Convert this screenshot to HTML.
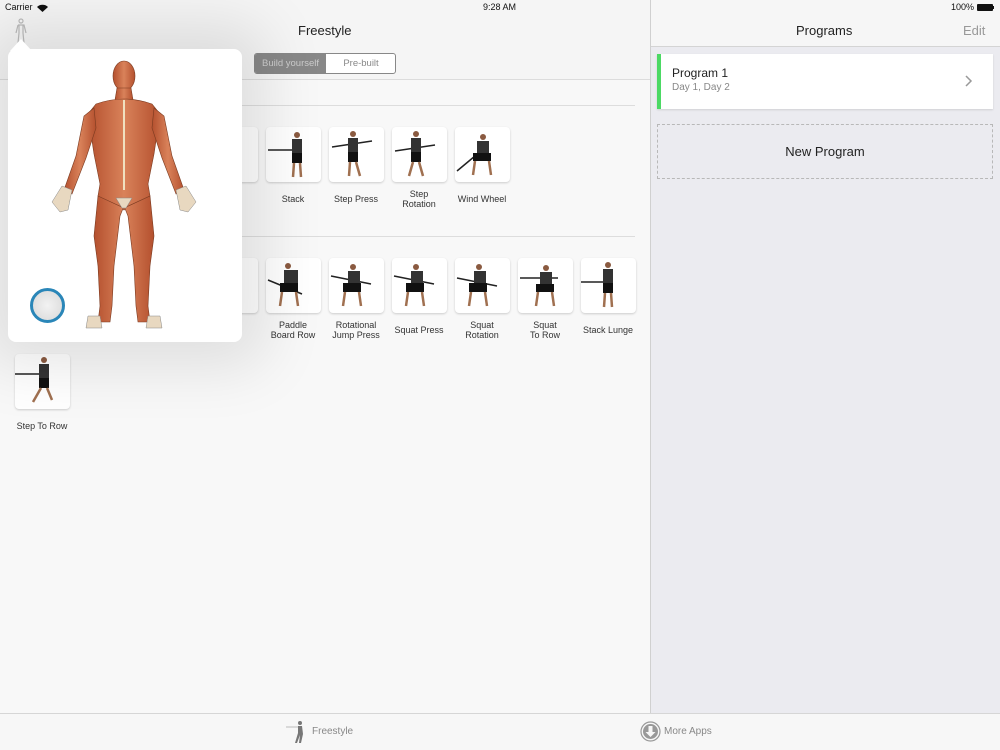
<!DOCTYPE html>
<html><head><meta charset="utf-8"><style>
*{margin:0;padding:0;box-sizing:border-box}
body{width:1000px;height:750px;overflow:hidden;background:#f8f8f8;font-family:"Liberation Sans",sans-serif;position:relative;color:#222}
.abs{position:absolute}
#left{left:0;top:0;width:650px;height:713px;background:#f8f8f8}
#nav{left:0;top:0;width:650px;height:80px;background:#f5f5f5;border-bottom:1px solid #dcdcdc}
#right{left:650px;top:0;width:350px;height:713px;background:#ebebf0;border-left:1px solid #d0d0d0}
#rnav{left:651px;top:0;width:349px;height:47px;background:#f6f6f6;border-bottom:1px solid #d4d4d4}
.thumb{position:absolute;width:55px;height:55px;background:#fff;border-radius:4px;box-shadow:0 1px 2px rgba(0,0,0,.18)}
.lbl{position:absolute;width:70px;text-align:center;font-size:9px;line-height:10px;color:#333}
#tab{left:0;top:713px;width:1000px;height:37px;background:#f7f7f7;border-top:1px solid #d6d6d6}
</style></head><body>
<div id="left" class="abs"></div>
<div id="nav" class="abs"></div>
<div class="abs" style="left:5px;top:2px;font-size:9px;color:#111">Carrier</div>
<svg class="abs" style="left:37px;top:4px" width="11" height="8" viewBox="0 0 11 8"><path d="M0 3a8 8 0 0 1 11 0L5.5 8z" fill="#111"/></svg>
<div class="abs" style="left:483px;top:2px;font-size:9px;color:#111">9:28 AM</div>
<div class="abs" style="left:298px;top:23px;font-size:13px;color:#222">Freestyle</div>
<svg class="abs" style="left:13px;top:18px" width="16" height="26" viewBox="0 0 16 26"><g fill="none" stroke="#bbb" stroke-width="1.2"><circle cx="8" cy="3" r="2"/><path d="M5 7h6l2 8M5 7l-2 8M6 7v8l-1 10M10 7v8l1 10"/></g></svg>
<div class="abs" style="left:254px;top:53px;width:142px;height:21px;border:1px solid #888;border-radius:3px;overflow:hidden;font-size:9.5px;line-height:19px;background:#fff">
<div class="abs" style="left:0;top:0;width:71px;height:19px;background:#888;color:#ccc;text-align:center">Build yourself</div>
<div class="abs" style="left:71px;top:0;width:70px;height:19px;color:#888;text-align:center">Pre-built</div></div>
<div class="abs" style="left:240px;top:105px;width:395px;height:1px;background:#ddd"></div>
<div class="abs" style="left:240px;top:236px;width:395px;height:1px;background:#ddd"></div>

<div class="thumb" style="left:203px;top:127px"></div>
<div class="thumb" style="left:203px;top:258px"></div>

<div class="thumb" style="left:266px;top:127px"></div>
<div class="thumb" style="left:329px;top:127px"></div>
<div class="thumb" style="left:392px;top:127px"></div>
<div class="thumb" style="left:455px;top:127px"></div>
<div class="lbl" style="left:258px;top:194px">Stack</div>
<div class="lbl" style="left:321px;top:194px">Step Press</div>
<div class="lbl" style="left:384px;top:189px">Step<br>Rotation</div>
<div class="lbl" style="left:447px;top:194px">Wind Wheel</div>
<div class="thumb" style="left:266px;top:258px"></div>
<div class="thumb" style="left:329px;top:258px"></div>
<div class="thumb" style="left:392px;top:258px"></div>
<div class="thumb" style="left:455px;top:258px"></div>
<div class="thumb" style="left:518px;top:258px"></div>
<div class="thumb" style="left:581px;top:258px"></div>
<div class="lbl" style="left:258px;top:320px">Paddle<br>Board Row</div>
<div class="lbl" style="left:321px;top:320px">Rotational<br>Jump Press</div>
<div class="lbl" style="left:384px;top:325px">Squat Press</div>
<div class="lbl" style="left:447px;top:320px">Squat<br>Rotation</div>
<div class="lbl" style="left:510px;top:320px">Squat<br>To Row</div>
<div class="lbl" style="left:573px;top:325px">Stack Lunge</div>
<div class="thumb" style="left:15px;top:354px"></div>
<div class="lbl" style="left:7px;top:421px">Step To Row</div>

<svg class="abs" style="left:0;top:0" width="650" height="440">
<g transform="translate(266,127)"><path d="M2 23h28" stroke="#222" stroke-width="1.5"/><circle cx="31" cy="8" r="3" fill="#8a5a40"/><rect x="26" y="12" width="10" height="14" fill="#333"/><rect x="26" y="26" width="10" height="10" fill="#111"/><path d="M28 36l-1 14M34 36l1 14" stroke="#a07050" stroke-width="2.5"/></g>
<g transform="translate(329,127)"><path d="M3 20l40-6" stroke="#222" stroke-width="1.5"/><circle cx="24" cy="7" r="3" fill="#8a5a40"/><rect x="19" y="11" width="10" height="14" fill="#333"/><rect x="19" y="25" width="10" height="10" fill="#111"/><path d="M21 35l-1 14M27 35l4 14" stroke="#a07050" stroke-width="2.5"/></g>
<g transform="translate(392,127)"><path d="M3 24l40-6" stroke="#222" stroke-width="1.5"/><circle cx="24" cy="7" r="3" fill="#8a5a40"/><rect x="19" y="11" width="10" height="14" fill="#333"/><rect x="19" y="25" width="10" height="10" fill="#111"/><path d="M21 35l-4 14M27 35l4 14" stroke="#a07050" stroke-width="2.5"/></g>
<g transform="translate(455,127)"><path d="M2 44l18-15" stroke="#222" stroke-width="1.5"/><circle cx="28" cy="10" r="3" fill="#8a5a40"/><rect x="22" y="14" width="12" height="12" fill="#333"/><rect x="18" y="26" width="18" height="8" fill="#111"/><path d="M20 34l-2 14M34 34l2 14" stroke="#a07050" stroke-width="2.5"/></g>
<g transform="translate(266,258)"><path d="M2 22l34 14" stroke="#222" stroke-width="1.5"/><circle cx="22" cy="8" r="3" fill="#8a5a40"/><rect x="18" y="12" width="14" height="13" fill="#333"/><rect x="14" y="25" width="18" height="9" fill="#111"/><path d="M16 34l-2 14M30 34l2 14" stroke="#a07050" stroke-width="2.5"/></g>
<g transform="translate(329,258)"><path d="M2 18l40 8" stroke="#222" stroke-width="1.5"/><circle cx="24" cy="9" r="3" fill="#8a5a40"/><rect x="19" y="13" width="12" height="12" fill="#333"/><rect x="14" y="25" width="18" height="9" fill="#111"/><path d="M16 34l-2 14M30 34l2 14" stroke="#a07050" stroke-width="2.5"/></g>
<g transform="translate(392,258)"><path d="M2 18l40 8" stroke="#222" stroke-width="1.5"/><circle cx="24" cy="9" r="3" fill="#8a5a40"/><rect x="19" y="13" width="12" height="12" fill="#333"/><rect x="14" y="25" width="18" height="9" fill="#111"/><path d="M16 34l-2 14M30 34l2 14" stroke="#a07050" stroke-width="2.5"/></g>
<g transform="translate(455,258)"><path d="M2 20l40 8" stroke="#222" stroke-width="1.5"/><circle cx="24" cy="9" r="3" fill="#8a5a40"/><rect x="19" y="13" width="12" height="12" fill="#333"/><rect x="14" y="25" width="18" height="9" fill="#111"/><path d="M16 34l-2 14M30 34l2 14" stroke="#a07050" stroke-width="2.5"/></g>
<g transform="translate(518,258)"><path d="M2 20h38" stroke="#222" stroke-width="1.5"/><circle cx="28" cy="10" r="3" fill="#8a5a40"/><rect x="22" y="14" width="12" height="12" fill="#333"/><rect x="18" y="26" width="18" height="8" fill="#111"/><path d="M20 34l-2 14M34 34l2 14" stroke="#a07050" stroke-width="2.5"/></g>
<g transform="translate(581,258)"><path d="M0 24h32" stroke="#222" stroke-width="1.5"/><circle cx="27" cy="7" r="3" fill="#8a5a40"/><rect x="22" y="11" width="10" height="14" fill="#333"/><rect x="22" y="25" width="10" height="10" fill="#111"/><path d="M24 35l-1 14M30 35l1 14" stroke="#a07050" stroke-width="2.5"/></g>
<g transform="translate(15,354)"><path d="M0 20h32" stroke="#222" stroke-width="1.5"/><circle cx="29" cy="6" r="3" fill="#8a5a40"/><rect x="24" y="10" width="10" height="14" fill="#333"/><rect x="24" y="24" width="10" height="10" fill="#111"/><path d="M26 34l-8 14M32 34l5 12" stroke="#a07050" stroke-width="2.5"/></g>
</svg>

<div class="abs" style="left:8px;top:49px;width:234px;height:293px;background:#fff;border-radius:8px;box-shadow:0 0 60px 25px rgba(0,0,0,.10)"></div>
<svg class="abs" style="left:8px;top:37px" width="30" height="14"><path d="M2 14L13 2l11 12z" fill="#fff"/></svg>
<svg class="abs" style="left:50px;top:58px" width="150" height="275" viewBox="50 58 150 275">
<defs><linearGradient id="m" x1="0" x2="1"><stop offset="0" stop-color="#b4502e"/><stop offset=".5" stop-color="#d9825a"/><stop offset="1" stop-color="#b4502e"/></linearGradient></defs>
<g fill="url(#m)" stroke="#7a3a20" stroke-width=".6">
<ellipse cx="124" cy="76" rx="11" ry="15"/>
<path d="M117 88h14l2 12h-18z"/>
<path d="M96 104q28-10 56 0l8 10-6 40-6 30 2 12-26 14-26-14 2-12-6-30-6-40z"/>
<path d="M94 108l-10 8-8 40-12 34 8 4 14-36 10-30z"/>
<path d="M154 108l10 8 8 40 12 34-8 4-14-36-10-30z"/>
<path d="M98 196l26 12 26-12 4 40-4 30-2 40 2 16h-12l-2-16-2-40-6-50-4-10-4 10-6 50-2 40-2 16h-12l2-16-2-40-4-30z"/>
</g>
<g fill="#e8d8c0" stroke="#888" stroke-width=".5">
<path d="M62 186l10 4-4 20-8 2-8-10z"/><path d="M186 186l-10 4 4 20 8 2 8-10z"/>
<path d="M116 198h16l-6 10h-4z"/>
<path d="M88 316h12l2 12h-16z"/><path d="M148 316h12l2 12h-16z"/>
</g>
<path d="M124 100v90" stroke="#f0e0c0" stroke-width="2"/>
</svg>
<div class="abs" style="left:30px;top:288px;width:35px;height:35px;border-radius:50%;border:3px solid #2a86b8;background:radial-gradient(#f2f2f2,#d8d8d8)"></div>

<div id="right" class="abs"></div>
<div id="rnav" class="abs"></div>
<div class="abs" style="left:951px;top:2px;font-size:9px;color:#111">100%</div>
<div class="abs" style="left:977px;top:4px;width:16px;height:7px;background:#111;border-radius:1px"></div>
<div class="abs" style="left:993px;top:6px;width:1px;height:3px;background:#111"></div>
<div class="abs" style="left:796px;top:23px;font-size:13px;color:#222">Programs</div>
<div class="abs" style="left:963px;top:23px;font-size:13px;color:#999">Edit</div>
<div class="abs" style="left:657px;top:54px;width:336px;height:55px;background:#fff;box-shadow:0 1px 2px rgba(0,0,0,.12);border-left:4px solid #4cd964"></div>
<div class="abs" style="left:672px;top:66px;font-size:12px;color:#222">Program 1</div>
<div class="abs" style="left:672px;top:82px;font-size:10px;color:#888">Day 1, Day 2</div>
<svg class="abs" style="left:965px;top:75px" width="8" height="12"><path d="M1 1l5 5-5 5" stroke="#999" stroke-width="1.5" fill="none"/></svg>
<div class="abs" style="left:657px;top:124px;width:336px;height:55px;border:1px dashed #b8b8b8"></div>
<div class="abs" style="left:657px;top:144px;width:336px;text-align:center;font-size:13px;color:#222">New Program</div>

<div id="tab" class="abs"></div>
<svg class="abs" style="left:286px;top:720px" width="22" height="24" viewBox="0 0 22 24"><path d="M0 7h14" stroke="#bbb"/><circle cx="14" cy="3" r="2" fill="#777"/><path d="M12 6h4l1 8-2 9h-2l1-8-3 8H9l3-10z" fill="#777"/></svg>
<div class="abs" style="left:312px;top:726px;font-size:10px;color:#888">Freestyle</div>
<svg class="abs" style="left:640px;top:721px" width="21" height="21" viewBox="0 0 21 21"><circle cx="10.5" cy="10.5" r="9.5" fill="none" stroke="#999" stroke-width="1.2"/><circle cx="10.5" cy="10.5" r="7.5" fill="#999"/><path d="M8.5 5h4v6h3l-5 5-5-5h3z" fill="#f7f7f7"/></svg>
<div class="abs" style="left:664px;top:726px;font-size:10px;color:#888">More Apps</div>
</body></html>
